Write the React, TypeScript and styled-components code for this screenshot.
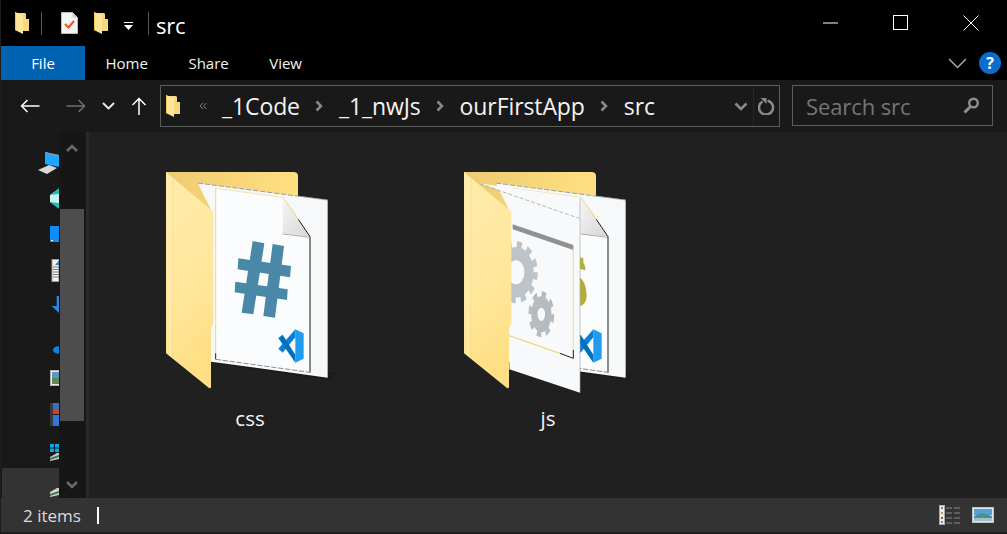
import React from "react";
import styled, { createGlobalStyle } from "styled-components";

const Global = createGlobalStyle`
  html, body { margin: 0; padding: 0; background: #1c1c1c; overflow: hidden; }
  #root { width: 1007px; height: 534px; }
`;

const uiFont = `"Open Sans", "Noto Sans", "Liberation Sans", sans-serif`;

const Frame = styled.div`
  width: 1007px;
  height: 534px;
  box-sizing: border-box;
  padding: 0 0 2px 1px;
  background: #1e1e1e;
  display: flex;
  flex-direction: column;
  overflow: hidden;
  font-family: ${uiFont};
  color: #fff;
`;

const TitleBar = styled.div`
  height: 46px;
  flex: none;
  background: #000;
  display: flex;
  align-items: center;
  padding-left: 14px;
`;
const Slot = styled.span<{ $ml: number; $pt?: number }>`
  display: flex;
  align-items: center;
  margin-left: ${(p) => p.$ml}px;
  padding-top: ${(p) => p.$pt ?? 0}px;
`;
const TitleSep = styled.span<{ $ml: number }>`
  width: 1px;
  height: 23px;
  background: #5a5a5a;
  margin-left: ${(p) => p.$ml}px;
`;
const TitleText = styled.span`
  font-size: 22px;
  margin-left: 7px;
  padding-top: 4px;
  line-height: 42px;
  letter-spacing: -0.2px;
`;
const WinControls = styled.div`
  margin-left: auto;
  padding-right: 1px;
  display: flex;
`;
const WinButton = styled.span`
  width: 70px;
  height: 46px;
  display: flex;
  align-items: center;
  justify-content: center;
`;

const Ribbon = styled.div`
  height: 34px;
  flex: none;
  background: #000;
  display: flex;
  align-items: center;
`;
const FileTab = styled.div`
  width: 84px;
  height: 34px;
  background: #0063b1;
  display: flex;
  align-items: center;
  justify-content: center;
  font-size: 15px;
`;
const Tab = styled.div`
  padding: 0 20px 0 20.5px;
  font-size: 15px;
  color: #f2f2f2;
`;
const RibbonRight = styled.div`
  margin-left: auto;
  display: flex;
  align-items: center;
  gap: 12px;
  padding-right: 6px;
`;
const HelpDot = styled.span`
  width: 22px;
  height: 22px;
  border-radius: 50%;
  background: #0a6ccb;
  color: #fff;
  display: flex;
  align-items: center;
  justify-content: center;
  font-size: 16px;
  font-weight: 700;
`;

const AddressRow = styled.div`
  height: 52px;
  flex: none;
  background: #191919;
  display: flex;
  align-items: center;
`;
const AddressBox = styled.div`
  width: 620px;
  height: 42px;
  box-sizing: border-box;
  margin-left: 13px;
  border: 1px solid #5c5c5c;
  display: flex;
  align-items: center;
  padding-left: 5px;
`;
const Crumbs = styled.div`
  display: flex;
  align-items: center;
  gap: 15.5px;
  margin-left: 15px;
`;
const Crumb = styled.span`
  font-size: 23px;
  letter-spacing: -0.1px;
  color: #f4f4f4;
`;
const AddressEnd = styled.div`
  margin-left: auto;
  height: 100%;
  display: flex;
  align-items: center;
`;
const RefreshCell = styled.span`
  width: 25px;
  height: 100%;
  margin-left: 5px;
  border-left: 1px solid #262626;
  display: flex;
  align-items: center;
  justify-content: center;
`;
const SearchBox = styled.div`
  width: 201px;
  height: 41px;
  box-sizing: border-box;
  margin: 0 0 1px 12px;
  border: 1px solid #5c5c5c;
  display: flex;
  align-items: center;
  justify-content: space-between;
  padding: 0 12px 0 13px;
  font-size: 22px;
  letter-spacing: -0.1px;
  color: #757575;
`;

const Main = styled.div`
  flex: 1;
  min-height: 0;
  display: flex;
  background: #202020;
`;
const NavPane = styled.div`
  width: 58px;
  flex: none;
  background: #191919;
  padding-top: 11.75px;
  box-sizing: border-box;
  overflow: hidden;
`;
const NavRow = styled.div<{ $selected?: boolean }>`
  height: 36.5px;
  display: flex;
  justify-content: flex-end;
  align-items: center;
  box-sizing: content-box;
  ${(p) =>
    p.$selected
      ? `background:#333; margin:-4px 0 0 1px; padding-top:4px;`
      : ""}
`;
const Scrollbar = styled.div`
  width: 27px;
  flex: none;
  box-sizing: border-box;
  padding: 0 2px 0 1px;
  background: #161616;
  display: flex;
  flex-direction: column;
  align-items: center;
`;
const ScrollArrow = styled.svg<{ $mt?: string }>`
  flex: none;
  margin-top: ${(p) => p.$mt ?? "0"};
`;
const Thumb = styled.div`
  width: 24px;
  height: 212px;
  margin-top: 57px;
  background: #4d4d4d;
  flex: none;
`;
const Splitter = styled.div`
  width: 3px;
  flex: none;
  background: #2a2a2a;
`;
const Content = styled.div`
  flex: 1;
  display: flex;
  padding: 28px 0 0 12px;
  align-items: flex-start;
`;
const Tile = styled.div`
  width: 298px;
  display: flex;
  flex-direction: column;
  align-items: center;
`;
const TileLabel = styled.span`
  font-size: 20.5px;
  line-height: 26px;
  margin-top: 5px;
  color: #f6f6f6;
`;

const StatusBar = styled.div`
  height: 34px;
  flex: none;
  background: #333;
  display: flex;
  align-items: center;
  padding: 0 13px 0 22px;
  font-size: 17px;
  color: #dcdcdc;
`;
const Caret = styled.span`
  width: 2px;
  height: 17px;
  background: #fff;
  margin-left: 16px;
`;
const StatusIcons = styled.div`
  margin-left: auto;
  display: flex;
  align-items: center;
  gap: 11px;
`;

const SmallFolder = () => (
  <svg width="14" height="22" viewBox="0 0 14 22">
    <path d="M2 1h8l1 1v5h3v12H6z" fill="#f7d77f" />
    <path d="M0 0l8 3v19l-8-4z" fill="#ffe596" />
    <path d="M0 0l1 .4V18.5l-1-.5z" fill="#f2c45c" />
  </svg>
);

const NoteIcon = () => (
  <svg width="17" height="22" viewBox="0 0 17 22">
    <path d="M.5.5h11l5 5v16H.5z" fill="#f5f5f5" stroke="#bdbdbd" />
    <path d="M11.5.5v5h5z" fill="#d0d0d0" />
    <path d="M4 12l3.5 3.5L13 9" fill="none" stroke="#e8561f" strokeWidth="2" />
  </svg>
);

const FolderArt = ({ kind }: { kind: "css" | "js" }) => (
  <svg width="200" height="240" viewBox="0 0 600 720">
    <defs>
      <linearGradient id={`back-${kind}`} x1="0" x2="1" y1="0" y2="0">
        <stop offset="0" stopColor="#eecb72" />
        <stop offset="1" stopColor="#ffe080" />
      </linearGradient>
      <linearGradient id={`flap-${kind}`} x1="0" x2="0.2" y1="0" y2="1">
        <stop offset="0" stopColor="#ffebac" />
        <stop offset="0.6" stopColor="#ffe79c" />
        <stop offset="1" stopColor="#fedf84" />
      </linearGradient>
      <linearGradient id={`fold-${kind}`} x1="0" x2="1" y1="0" y2="1">
        <stop offset="0" stopColor="#f6f6f6" />
        <stop offset="1" stopColor="#d6d6d6" />
      </linearGradient>
    </defs>
    <polygon points="190,610 540,660 560,640 300,590" fill="#1b1b1b" />
    <path d="M48 36H430q14 0 14 12V400H48z" fill={`url(#back-${kind})`} />
    <polygon points="143,68 533,120 533,653 183,605 183,150" fill="#f7f8f9" />
    <polygon points="197,85 398,112 480,230 480,638 197,597" fill="#fbfcfd" />
    <line x1="143" y1="69" x2="533" y2="120" stroke="#9c9c9c" strokeWidth="3" strokeDasharray="16 5" />
    <line x1="197" y1="85" x2="197" y2="590" stroke="#f5d680" strokeWidth="3" />
    <line x1="197" y1="85" x2="398" y2="112" stroke="#f5d680" strokeWidth="2" />
    <line x1="398" y1="112" x2="445" y2="178" stroke="#f5cf6a" strokeWidth="4" />
    <polygon points="398,112 480,230 398,222" fill={`url(#fold-${kind})`} />
    <line x1="398" y1="222" x2="480" y2="232" stroke="#b0b0b0" strokeWidth="3" />
    <polyline points="445,178 480,230 480,638" fill="none" stroke="#1a1a1a" strokeWidth="3" />
    <line x1="197" y1="598" x2="480" y2="637" stroke="#8d8d8d" strokeWidth="3" strokeDasharray="16 5" />
    <line x1="197" y1="580" x2="197" y2="598" stroke="#222" strokeWidth="3" />
    {kind === "css" ? (
      <g fill="#4a88a8">
        <polygon points="308,243 343,250 310,463 275,458" />
        <polygon points="368,252 402,258 375,473 340,468" />
        <polygon points="265,295 423,318 420,352 263,328" />
        <polygon points="256,365 413,388 411,420 254,397" />
      </g>
    ) : (
      <path
        d="M394 293h12v16c4 2 6 12 6 22l-22-6zM390 350c16 4 26 30 26 56 0 20-10 32-26 34z"
        fill="#b5ad3a"
      />
    )}
    <g>
      <polygon points="436,508 461,520 461,596 436,608" fill="#1f9cf0" />
      <polygon points="436,508 436,532 398,578 385,566" fill="#0a80d4" />
      <polygon points="385,534 398,524 436,584 436,608" fill="#0070bc" />
    </g>
    {kind === "js" && (
      <g transform="translate(6 0)">
        <polygon points="88,70 390,115 390,698 178,628 178,100" fill="#f8f9fa" />
        <line x1="90" y1="72" x2="388" y2="175" stroke="#aaa" strokeWidth="2.5" strokeDasharray="12 6" />
        <polygon points="188,193 370,255 370,270 188,208" fill="#8e9091" />
        <polyline points="370,262 370,595" fill="none" stroke="#f5d270" strokeWidth="2.5" />
        <line x1="172" y1="525" x2="335" y2="582" stroke="#f0c860" strokeWidth="3" />
        <polyline points="330,580 370,595 370,570" fill="none" stroke="#222" strokeWidth="3" />
        <line x1="390" y1="115" x2="390" y2="698" stroke="#a8a8a8" strokeWidth="2" />
        <g transform="translate(198 337) scale(0.7 1)" fill="none" stroke="#bcc4ca">
          <circle r="56" strokeWidth="40" />
          <circle r="80" strokeWidth="26" strokeDasharray="21 21" />
        </g>
        <g transform="translate(274 463) scale(0.56 1)" fill="none" stroke="#b4bcc2">
          <circle r="37" strokeWidth="34" />
          <circle r="60" strokeWidth="18" strokeDasharray="23.5 23.6" />
        </g>
      </g>
    )}
    <path
      d="M48 36L190 155V490L183 505V680Q182 686 177 684L48 580z"
      fill={`url(#flap-${kind})`}
    />
    <line x1="60" y1="50" x2="60" y2="588" stroke="#fff2c4" strokeWidth="3" />
    <line x1="69" y1="56" x2="69" y2="596" stroke="#f9dd8a" strokeWidth="2" />
  </svg>
);

const navIcons: React.ReactNode[] = [
  <>
    <polygon points="8,6 22,9 22,21 8,18" fill="#1ea7ff" />
    <polygon points="8,6 22,9 22,10.5 8,7.5" fill="#8a96a0" />
    <polygon points="1,24 12,19 20,22 10,28" fill="#d5d9dc" />
  </>,
  <>
    <polygon points="13,12 22,5.5 22,25.5 13,19" fill="#c9f5f0" />
    <polygon points="13,12 22,5.5 22,11" fill="#22bcbc" />
    <polygon points="13,19 22,25.5 22,20" fill="#22bcbc" />
  </>,
  <>
    <rect x="13" y="7" width="9" height="16" fill="#0f8cf5" />
    <rect x="14" y="21" width="2" height="1" fill="#fff" />
  </>,
  <>
    <rect x="15" y="3.5" width="7" height="22" fill="#f2f2f2" stroke="#9a9a9a" />
    <polygon points="18,9 22,4.5 22,9" fill="#2a7fd0" />
    <path d="M16 11h6M16 13.500h6M16 16h6M16 18.500h6M16 21h6" stroke="#808080" />
  </>,
  <polygon points="14.700,14 19.700,14 19.700,4 22,4 22,21" fill="#2b88dc" />,
  <ellipse cx="21" cy="21" rx="5" ry="3.700" fill="#0a84e8" />,
  <>
    <rect x="13.500" y="5.500" width="9" height="15" fill="#eee" stroke="#b0b0b0" />
    <rect x="15" y="7" width="7" height="6" fill="#5e97c0" />
    <rect x="15" y="13" width="7" height="6" fill="#5c8a5a" />
  </>,
  <>
    <rect x="13" y="1" width="3" height="23" fill="#3a3a3a" />
    <rect x="16" y="1" width="6" height="11" fill="#3f6fb8" />
    <rect x="16" y="8" width="6" height="4" fill="#c8462e" />
    <rect x="16" y="13" width="6" height="11" fill="#2f78d8" />
  </>,
  <>
    <path d="M13 6h4v3.500h-4zM18 6h4v3.500h-4zM13 10.500h4V14h-4zM18 10.500h4V14h-4z" fill="#00adef" />
    <polygon points="13,19 20,15 22,15 22,21 13,23" fill="#c9c9c9" />
    <polygon points="13,20 22,17 22,19 13,22" fill="#3f7a4a" />
  </>,
  <>
    <polygon points="13,17 20,13 22,13 22,20 13,22" fill="#d0d0d0" />
    <polygon points="13,19 22,16 22,18 13,21" fill="#3f7a4a" />
  </>,
];

export default function App() {
  return (
    <>
      <Global />
      <Frame>
        <TitleBar>
          <SmallFolder />
          <TitleSep $ml={12} />
          <Slot $ml={19}>
            <NoteIcon />
          </Slot>
          <Slot $ml={16}>
            <SmallFolder />
          </Slot>
          <Slot $ml={16} $pt={6}>
            <svg width="9" height="8" viewBox="0 0 9 8">
              <path d="M0 0h9v1H0zM0 3h9L4.500 8z" fill="#fff" />
            </svg>
          </Slot>
          <TitleSep $ml={15} />
          <TitleText>src</TitleText>
          <WinControls>
            <WinButton>
              <svg width="16" height="2" viewBox="0 0 16 2">
                <rect width="15" height="1" y="0.500" fill="#fff" />
              </svg>
            </WinButton>
            <WinButton>
              <svg width="16" height="16" viewBox="0 0 16 16">
                <rect x=".5" y=".5" width="14" height="14" fill="none" stroke="#fff" />
              </svg>
            </WinButton>
            <WinButton>
              <svg width="16" height="16" viewBox="0 0 16 16">
                <path d="M.5.5l15 15M15.500.5l-15 15" stroke="#fff" fill="none" />
              </svg>
            </WinButton>
          </WinControls>
        </TitleBar>
        <Ribbon>
          <FileTab>File</FileTab>
          <Tab>Home</Tab>
          <Tab>Share</Tab>
          <Tab>View</Tab>
          <RibbonRight>
            <svg width="19" height="11" viewBox="0 0 19 11">
              <path d="M1 1l8.500 8.500L18 1" fill="none" stroke="#a8a8a8" strokeWidth="1.500" />
            </svg>
            <HelpDot>?</HelpDot>
          </RibbonRight>
        </Ribbon>
        <AddressRow>
          <Slot $ml={19}>
            <svg width="20" height="14" viewBox="0 0 20 14">
              <path d="M19.500 7H1.500M7.500 1l-6 6 6 6" fill="none" stroke="#fff" strokeWidth="1.500" />
            </svg>
          </Slot>
          <Slot $ml={26}>
            <svg width="20" height="14" viewBox="0 0 20 14">
              <path d="M.5 7h18M12.500 1l6 6-6 6" fill="none" stroke="#6f6f6f" strokeWidth="1.500" />
            </svg>
          </Slot>
          <Slot $ml={16}>
            <svg width="13" height="8" viewBox="0 0 13 8">
              <path d="M1 1l5.500 5.500L12 1" fill="none" stroke="#f0f0f0" strokeWidth="1.800" />
            </svg>
          </Slot>
          <Slot $ml={16}>
            <svg width="16" height="18" viewBox="0 0 16 18">
              <path d="M8 18V1.500M1.500 8L8 1.500 14.500 8" fill="none" stroke="#fff" strokeWidth="1.500" />
            </svg>
          </Slot>
          <AddressBox>
            <SmallFolder />
            <Slot $ml={19}>
              <svg width="8" height="8" viewBox="0 0 8 8">
                <path d="M4 1L1 4l3 3M7.500 1l-3 3 3 3" fill="none" stroke="#7d7d7d" />
              </svg>
            </Slot>
            <Crumbs>
              {["_1Code", "_1_nwJs", "ourFirstApp", "src"].map((c, i) => (
                <React.Fragment key={c}>
                  {i > 0 && (
                    <svg width="8" height="12" viewBox="0 0 8 12">
                      <path d="M1.500 1.500L6 6l-4.500 4.500" fill="none" stroke="#8a8a8a" strokeWidth="2.500" />
                    </svg>
                  )}
                  <Crumb>{c}</Crumb>
                </React.Fragment>
              ))}
            </Crumbs>
            <AddressEnd>
              <svg width="14" height="9" viewBox="0 0 14 9">
                <path d="M1.500 1.500L7 7l5.500-5.500" fill="none" stroke="#8a8a8a" strokeWidth="2.500" />
              </svg>
              <RefreshCell>
                <svg width="17" height="18" viewBox="0 0 17 18">
                  <path d="M4.500 3.500a7 7 0 1 0 5-.8" fill="none" stroke="#8a8a8a" strokeWidth="2.500" transform="translate(0 1)" />
                  <path d="M2.500 0h6v6z" fill="#8a8a8a" transform="translate(0 1)" />
                </svg>
              </RefreshCell>
            </AddressEnd>
          </AddressBox>
          <SearchBox>
            Search src
            <svg width="17" height="17" viewBox="0 0 17 17">
              <circle cx="10.500" cy="6" r="4.300" fill="none" stroke="#8f8f8f" strokeWidth="2.400" />
              <path d="M7 10l-5.500 5.500" stroke="#8f8f8f" strokeWidth="3" />
            </svg>
          </SearchBox>
        </AddressRow>
        <Main>
          <NavPane>
            {navIcons.map((icon, i) => (
              <NavRow key={i} $selected={i === navIcons.length - 1}>
                <svg width="22" height="32" viewBox="0 0 22 32">
                  {icon}
                </svg>
              </NavRow>
            ))}
          </NavPane>
          <Scrollbar>
            <ScrollArrow width="12" height="8" viewBox="0 0 12 8" $mt="12px">
              <path d="M1 7l5-5 5 5" fill="none" stroke="#6a6a6a" strokeWidth="2.500" />
            </ScrollArrow>
            <Thumb />
            <ScrollArrow width="12" height="8" viewBox="0 0 12 8" $mt="60px">
              <path d="M1 1l5 5 5-5" fill="none" stroke="#6a6a6a" strokeWidth="2.500" />
            </ScrollArrow>
          </Scrollbar>
          <Splitter />
          <Content>
            <Tile>
              <FolderArt kind="css" />
              <TileLabel>css</TileLabel>
            </Tile>
            <Tile>
              <FolderArt kind="js" />
              <TileLabel>js</TileLabel>
            </Tile>
          </Content>
        </Main>
        <StatusBar>
          2 items
          <Caret />
          <StatusIcons>
            <svg width="22" height="20" viewBox="0 0 22 20">
              <rect x=".5" y=".5" width="5" height="19" fill="#eee" stroke="#aaa" />
              <rect x="2" y="2" width="2" height="2" fill="#4a90a8" />
              <rect x="2" y="7" width="2" height="2" fill="#b0a040" />
              <rect x="2" y="12" width="2" height="2" fill="#b04030" />
              <rect x="2" y="16" width="2" height="2" fill="#7090b0" />
              <path d="M7 3h6M15 3h6M7 8h6M15 8h6M7 13h6M15 13h6M7 18h6M15 18h6" stroke="#8a8a8a" />
            </svg>
            <svg width="22" height="16" viewBox="0 0 22 16">
              <rect x=".5" y=".5" width="21" height="15" fill="#dfe6ea" stroke="#c4c4c4" />
              <rect x="2" y="2" width="18" height="6" fill="#4fa3d8" />
              <polygon points="2,9 10,6 20,9 20,11 2,11" fill="#4f8f88" />
              <rect x="2" y="11" width="18" height="3" fill="#9ec0cc" />
            </svg>
          </StatusIcons>
        </StatusBar>
      </Frame>
    </>
  );
}
